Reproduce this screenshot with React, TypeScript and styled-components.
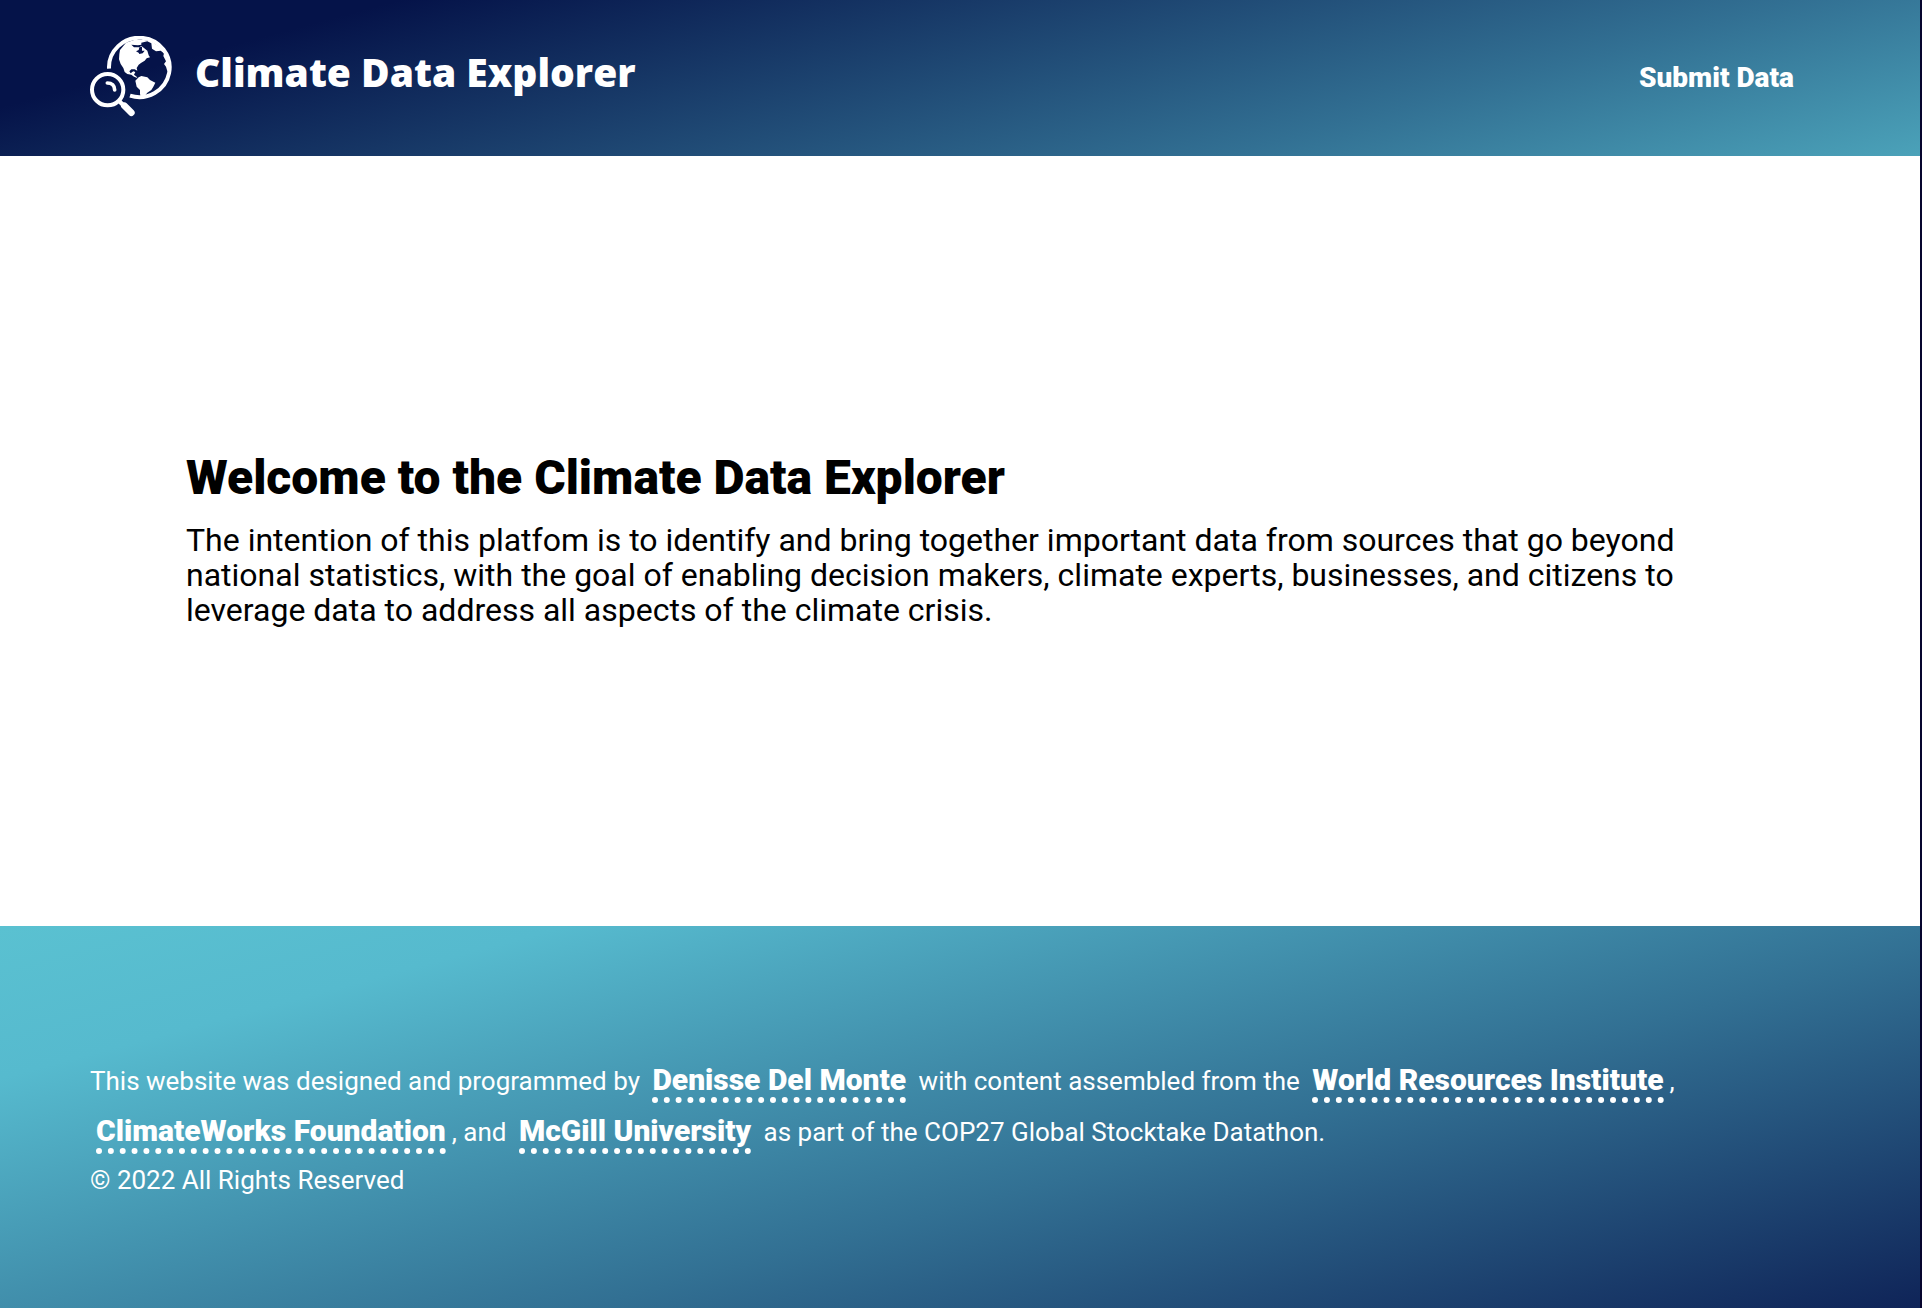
import React from "react";
import styled, { createGlobalStyle } from "styled-components";

const GlobalStyle = createGlobalStyle`
  *, *::before, *::after { box-sizing: border-box; }
  body {
    margin: 0;
    background: #07052e;
    color: #000;
    font-family: Roboto, "Liberation Sans", sans-serif;
  }
`;

const Page = styled.div`
  display: flex;
  flex-direction: column;
  min-height: 100vh;
  margin-right: 2px;
  background: #fff;
`;

const Header = styled.header`
  display: flex;
  align-items: flex-start;
  justify-content: space-between;
  padding: 36px 126px 36px 90px;
  color: #fff;
  background: linear-gradient(165deg, #051349 16%, #327093 72%, #4ba2b9 100%);
`;

const Brand = styled.a`
  display: flex;
  align-items: flex-start;
  gap: 22px;
  color: inherit;
  text-decoration: none;
`;

const Wordmark = styled.span`
  font-family: "Open Sans", sans-serif;
  font-size: 39px;
  font-weight: 800;
  line-height: 72px;
`;

const NavLink = styled.a`
  display: block;
  color: inherit;
  font-size: 28px;
  font-weight: 900;
  line-height: 84px;
  text-decoration: none;
`;

const Main = styled.main`
  display: flex;
  flex: 1;
  flex-direction: column;
  justify-content: center;
  padding: 60px 186px 64px;
`;

const Title = styled.h1`
  margin: 0 0 17px;
  font-size: 48px;
  font-weight: 900;
  line-height: 56px;
`;

const Intro = styled.p`
  margin: 0;
  font-size: 32px;
  line-height: 35px;
`;

const Footer = styled.footer`
  padding: 130px 200px 105px 90px;
  color: #fff;
  font-size: 26px;
  background: linear-gradient(165deg, #5ac1d1 0%, #56bace 17%, #327093 60%, #0f2458 100%);
`;

const Credits = styled.p`
  margin: 0;
  line-height: 51px;
`;

const Copyright = styled.p`
  margin: 0;
  line-height: 45px;
`;

const CreditLink = styled.a`
  margin: 0 6px;
  border-bottom: 6px dotted #fff;
  color: inherit;
  font-size: 30px;
  font-weight: 900;
  line-height: 36px;
  text-decoration: none;
`;

function GlobeSearchLogo() {
  return (
    <svg width="83" height="81" viewBox="60 46 249 243" fill="none" aria-hidden="true">
      <path d="M117 144A91 89 0 1 1 180 225" stroke="#fff" strokeWidth="12" />
      <path
        fill="#fff"
        d="M150 88L168 66L192 58L222 58L242 60L276 84L296 110L302 140L292 152L288 138L282 130L288 122L280 106L282 98L272 90L258 92L246 84L244 68L232 62L214 66L214 72L204 74L184 72L192 80L208 80L214 76L222 82L232 90L236 104L240 110L230 113L224 120L214 126L206 132L200 142L202 150L194 146L184 146L178 152L182 158L190 152L196 154L192 162L200 168L202 172L192 168L184 162L172 160L164 154L160 142L152 130L147 116L148 100Z"
      />
      <path fill="#07134c" d="M198 92L206 88L208 80L216 78L216 90L224 90L218 98L208 100L206 96Z" />
      <path
        fill="#fff"
        d="M196 180L206 170L214 166L232 170L240 178L256 186L250 198L244 208L232 216L224 226L214 232L210 220L210 208L200 198Z"
      />
      <circle cx="113" cy="207" r="47" stroke="#fff" strokeWidth="12" />
      <path d="M112 187C126 187 134 195 134 208" stroke="#fff" strokeWidth="11" strokeLinecap="round" />
      <path d="M144 238L172 265" stroke="#fff" strokeWidth="13" />
      <path d="M163 255L184 276" stroke="#fff" strokeWidth="20" strokeLinecap="round" />
    </svg>
  );
}

export default function App() {
  return (
    <>
      <GlobalStyle />
      <Page>
        <Header>
          <Brand href="#">
            <GlobeSearchLogo />
            <Wordmark>Climate Data Explorer</Wordmark>
          </Brand>
          <nav>
            <NavLink href="#submit">Submit Data</NavLink>
          </nav>
        </Header>
        <Main>
          <Title>Welcome to the Climate Data Explorer</Title>
          <Intro>
            The intention of this platfom is to identify and bring together important data from
            sources that go beyond national statistics, with the goal of enabling decision makers,
            climate experts, businesses, and citizens to leverage data to address all aspects of the
            climate crisis.
          </Intro>
        </Main>
        <Footer>
          <Credits>
            This website was designed and programmed by{" "}
            <CreditLink href="#designer">Denisse Del Monte</CreditLink> with content assembled from
            the <CreditLink href="#wri">World Resources Institute</CreditLink>,{" "}
            <CreditLink href="#climateworks">ClimateWorks Foundation</CreditLink>, and{" "}
            <CreditLink href="#mcgill">McGill University</CreditLink> as part of the COP27 Global
            Stocktake Datathon.
          </Credits>
          <Copyright>© 2022 All Rights Reserved</Copyright>
        </Footer>
      </Page>
    </>
  );
}
